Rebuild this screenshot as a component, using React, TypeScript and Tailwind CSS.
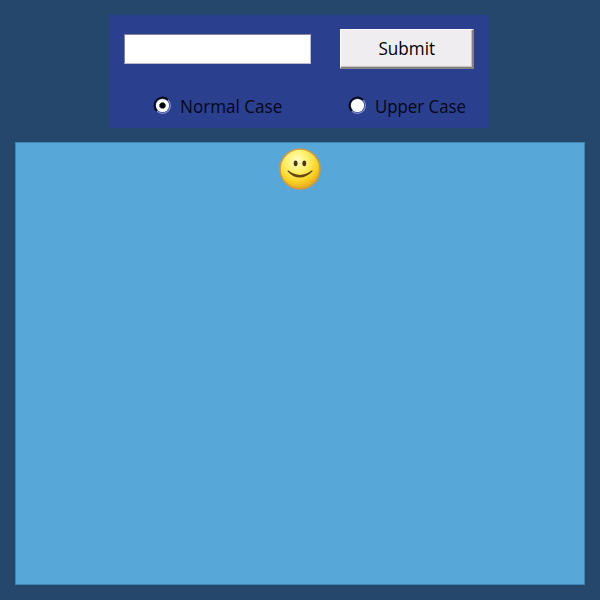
import { useState } from "react";

function Radio({ checked }: { checked: boolean }) {
  return (
    <svg width="19" height="19" viewBox="0 0 19 19" className="relative -top-px block shrink-0">
      <circle cx="9.5" cy="9.5" r="7.9" fill="none" stroke="#8391cf" strokeWidth="1.2" />
      <path d="M3.9 15.1A7.9 7.9 0 0 1 15.1 3.9" fill="none" stroke="#050814" strokeWidth="2" />
      <circle cx="9.5" cy="9.5" r="6.6" fill="#ffffff" />
      {checked && <path d="M8.3 6.4h2.4l1.9 1.9v2.4l-1.9 1.9H8.3l-1.9-1.9V8.3z" fill="#030408" />}
    </svg>
  );
}

function Smiley() {
  return (
    <svg width="44" height="44" viewBox="0 0 44 44" className="block">
      <defs>
        <radialGradient id="face" cx="42%" cy="30%" r="72%">
          <stop offset="0" stopColor="#fffcc5" />
          <stop offset="0.38" stopColor="#fff06c" />
          <stop offset="0.72" stopColor="#f9d325" />
          <stop offset="1" stopColor="#e4a01f" />
        </radialGradient>
      </defs>
      <circle cx="22" cy="22" r="20" fill="url(#face)" stroke="#c99a4b" strokeWidth="1.6" />
      <ellipse cx="17.6" cy="16.3" rx="1.9" ry="2.9" fill="#4b3514" />
      <ellipse cx="26.3" cy="16.3" rx="1.9" ry="2.9" fill="#4b3514" />
      <path d="M10 24Q21.5 36 34 24Q22 33 10 24Z" fill="#66430f" stroke="#66430f" strokeWidth="1.1" strokeLinejoin="round" />
    </svg>
  );
}

export default function App() {
  const [upper, setUpper] = useState(false);
  const [value, setValue] = useState("");
  return (
    <div className="flex h-[600px] w-[600px] flex-col items-center bg-[#25476b] pt-[15px] font-['Open_Sans','Noto_Sans',sans-serif] text-[18px] text-[#04071a]">
      <form
        onSubmit={(e) => e.preventDefault()}
        className="mr-[2px] h-[113px] w-[380px] bg-[#2b3f8f] pt-[14px] pl-[15px]"
      >
        <div className="flex h-[40px] items-center">
          <input
            value={value}
            onChange={(e) => setValue(e.target.value)}
            className="h-[30px] w-[187px] border border-[#b9b8ce] border-t-[#85839b] border-l-[#85839b] bg-white px-1 outline-none"
          />
          <button className="ml-[29px] h-[40px] w-[134px] border-t border-r-2 border-b-2 border-l border-t-white border-r-[#85827f] border-b-[#85827f] border-l-white bg-[#efedf0] text-black shadow-[inset_-1px_-1px_0_#c4c1c2]">
            <span className="inline-block scale-x-[0.95]">Submit</span>
          </button>
        </div>
        <div className="mt-[26px] flex h-[22px] items-center pl-[29px]">
          <button type="button" onClick={() => setUpper(false)} className="flex w-[195px] items-center gap-[8px]">
            <Radio checked={!upper} />
            <span className="inline-block origin-left scale-x-[0.95] whitespace-nowrap leading-[22px]">Normal Case</span>
          </button>
          <button type="button" onClick={() => setUpper(true)} className="flex items-center gap-[8px]">
            <Radio checked={upper} />
            <span className="inline-block origin-left scale-x-[0.935] whitespace-nowrap leading-[22px]">Upper Case</span>
          </button>
        </div>
      </form>
      <main className="mt-[14px] flex h-[443px] w-[570px] justify-center border border-[#4085b2] bg-[#57a7d8] pt-[4px]">
        <Smiley />
      </main>
    </div>
  );
}
